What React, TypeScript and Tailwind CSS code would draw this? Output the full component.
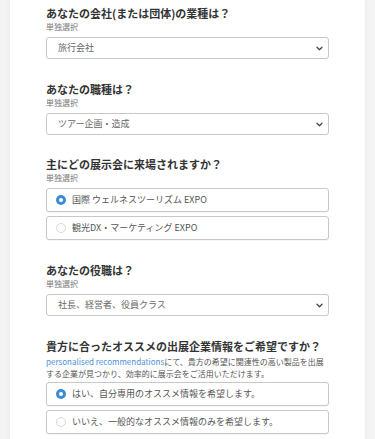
import React from 'react';

const FONT = { fontFamily: '"Noto Sans CJK JP", "Noto Sans", sans-serif' };

function Chevron() {
  return (
    <svg width="7" height="5" viewBox="0 0 7 5" className="shrink-0">
      <path d="M1 1.2l2.5 2.5 2.5-2.5" fill="none" stroke="#444" strokeWidth="1.3" strokeLinecap="round" strokeLinejoin="round" />
    </svg>
  );
}

function Heading({ children }: { children: React.ReactNode }) {
  return <h2 className="text-[11px] leading-[16px] font-bold text-[#333]">{children}</h2>;
}

function Sub() {
  return <p className="text-[8px] leading-[12px] text-[#777]">単独選択</p>;
}

function SelectBox({ value }: { value: string }) {
  return (
    <div className="mt-1 h-[22px] flex items-center justify-between pl-[11px] pr-[5px] border border-[#c8c8c8] rounded-[3px] bg-white">
      <span className="text-[9px] text-[#666]">{value}</span>
      <Chevron />
    </div>
  );
}

function Radio({ label, checked }: { label: string; checked?: boolean }) {
  return (
    <div className="h-[24px] flex items-center gap-[6px] pl-[9px] border border-[#c8c8c8] rounded-[3px] bg-white shadow-[0_1px_1px_rgba(0,0,0,0.04)]">
      {checked ? (
        <span className="w-[10px] h-[10px] rounded-full bg-[#3d8bd6] flex items-center justify-center">
          <span className="w-[4px] h-[4px] rounded-full bg-white" />
        </span>
      ) : (
        <span className="w-[10px] h-[10px] rounded-full border border-[#d8d8d8] bg-white" />
      )}
      <span className="text-[9px] text-[#555]">{label}</span>
    </div>
  );
}

export default function App() {
  return (
    <div className="min-h-screen bg-[#f4f4f4] px-[10px]" style={FONT}>
      <div className="bg-white shadow-[0_0_6px_rgba(0,0,0,0.06)] px-[36px] pt-[5px] pb-[10px]">
        <section>
          <Heading>あなたの会社(または団体)の業種は？</Heading>
          <Sub />
          <SelectBox value="旅行会社" />
        </section>

        <section className="mt-[22px]">
          <Heading>あなたの職種は？</Heading>
          <Sub />
          <SelectBox value="ツアー企画・造成" />
        </section>

        <section className="mt-[21px]">
          <Heading>主にどの展示会に来場されますか？</Heading>
          <Sub />
          <div className="mt-1 flex flex-col gap-[4px]">
            <Radio label="国際 ウェルネスツーリズム EXPO" checked />
            <Radio label="観光DX・マーケティング EXPO" />
          </div>
        </section>

        <section className="mt-[22px]">
          <Heading>あなたの役職は？</Heading>
          <Sub />
          <SelectBox value="社長、経営者、役員クラス" />
        </section>

        <section className="mt-[22px]">
          <Heading>貴方に合ったオススメの出展企業情報をご希望ですか？</Heading>
          <div className="mt-[2px] text-[8px] leading-[12px] text-[#555]">
            <p>
              <span className="text-[#4a90d9]">personalised recommendations</span>
              <span>にて、貴方の希望に関連性の高い製品を出展</span>
            </p>
            <p>する企業が見つかり、効率的に展示会をご活用いただけます。</p>
          </div>
          <div className="mt-[2px] flex flex-col gap-[4px]">
            <Radio label="はい、自分専用のオススメ情報を希望します。" checked />
            <Radio label="いいえ、一般的なオススメ情報のみを希望します。" />
          </div>
        </section>
      </div>
    </div>
  );
}
